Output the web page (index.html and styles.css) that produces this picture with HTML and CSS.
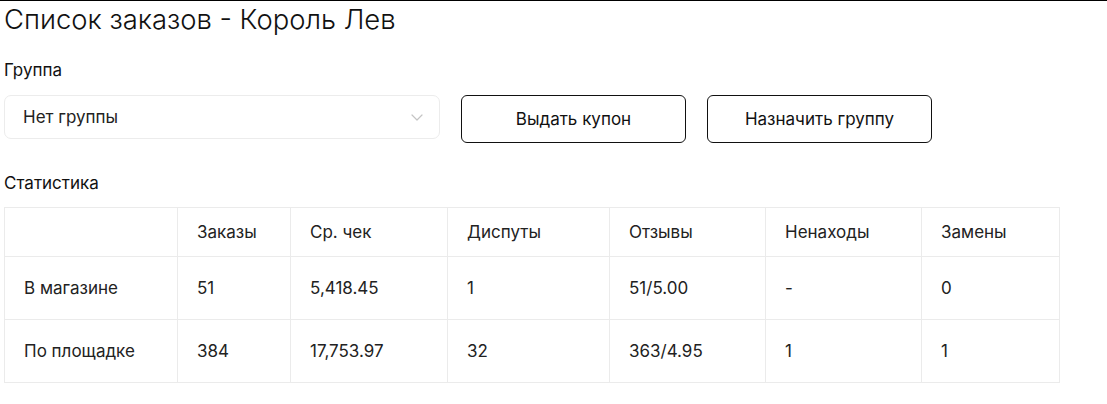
FILE: index.html
```html
<!DOCTYPE html>
<html lang="ru">
<head>
<meta charset="utf-8">
<title>Список заказов - Король Лев</title>
<link rel="stylesheet" href="styles.css">
</head>
<body>
<div class="page">
  <h1 class="title">Список заказов - Король Лев</h1>
  <div class="label">Группа</div>
  <div class="controls">
    <div class="select">
      <span class="select-value">Нет группы</span>
      <svg class="chevron" width="12" height="7" viewBox="0 0 12 7"><path d="M1 1l5 5 5-5" fill="none" stroke="#c4c4c4" stroke-width="1.2" stroke-linecap="round" stroke-linejoin="round"/></svg>
    </div>
    <button class="btn">Выдать купон</button>
    <button class="btn">Назначить группу</button>
  </div>
  <div class="label stats-label">Статистика</div>
  <table class="stats">
    <colgroup>
      <col style="width:173px"><col style="width:113px"><col style="width:157px"><col style="width:162px"><col style="width:156px"><col style="width:156px"><col style="width:138px">
    </colgroup>
    <thead>
      <tr><th></th><th>Заказы</th><th>Ср. чек</th><th>Диспуты</th><th>Отзывы</th><th>Ненаходы</th><th>Замены</th></tr>
    </thead>
    <tbody>
      <tr><td>В магазине</td><td>51</td><td>5,418.45</td><td>1</td><td>51/5.00</td><td>-</td><td>0</td></tr>
      <tr><td>По площадке</td><td>384</td><td>17,753.97</td><td>32</td><td>363/4.95</td><td>1</td><td>1</td></tr>
    </tbody>
  </table>
</div>
</body>
</html>
```
FILE: styles.css
```css
html, body {
  margin: 0;
  padding: 0;
  background: #fff;
}
body {
  font-family: Inter, "Noto Sans", sans-serif;
  color: #1a1a1a;
  border-top: 1px solid #000;
}
.page {
  padding: 0 4px;
}
.title {
  margin: 0;
  padding-top: 1px;
  font-size: 27.4px;
  line-height: 34px;
  font-weight: 300;
  color: #111;
}
.label {
  margin-top: 24px;
  font-size: 17px;
  line-height: 20px;
  font-weight: 400;
  color: #111;
}
.controls {
  display: flex;
  align-items: flex-start;
  gap: 21px;
  margin-top: 15px;
}
.select {
  box-sizing: border-box;
  width: 436px;
  height: 44px;
  border: 1px solid #ececec;
  border-radius: 7px;
  display: flex;
  align-items: center;
  justify-content: space-between;
  padding: 0 16px 0 18px;
  font-size: 17px;
  color: #222;
}
.chevron {
  display: block;
}
.btn {
  box-sizing: border-box;
  width: 225px;
  height: 48px;
  background: #fff;
  border: 1px solid #111;
  border-radius: 6px;
  font-family: Inter, "Noto Sans", sans-serif;
  font-size: 17px;
  font-weight: 400;
  color: #111;
  padding: 0;
}
.stats-label {
  margin-top: 30px;
}
.stats {
  margin-top: 14px;
  border-collapse: collapse;
  table-layout: fixed;
  width: 1055px;
  font-size: 17px;
  color: #222;
}
.stats th, .stats td {
  border: 1px solid #ebebeb;
  text-align: left;
  font-weight: 400;
  padding: 0 0 0 19px;
  line-height: 20px;
}
.stats th {
  height: 48px;
}
.stats td {
  height: 62px;
}
```
